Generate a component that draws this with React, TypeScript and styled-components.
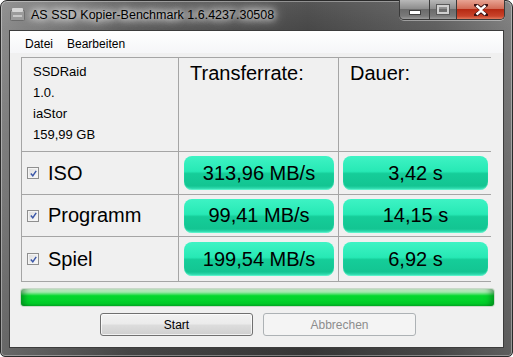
import React from "react";
import styled, { createGlobalStyle } from "styled-components";

const GlobalStyle = createGlobalStyle`
  html, body {
    margin: 0;
    padding: 0;
    background: #ffffff;
  }
  body {
    width: 513px;
    height: 357px;
    overflow: hidden;
    font-family: "Liberation Sans", Arial, sans-serif;
  }
`;

interface IResultRow {
  name: string;
  rate: string;
  duration: string;
}

const Results: IResultRow[] = [
  { name: "ISO", rate: "313,96 MB/s", duration: "3,42 s" },
  { name: "Programm", rate: "99,41 MB/s", duration: "14,15 s" },
  { name: "Spiel", rate: "199,54 MB/s", duration: "6,92 s" },
];

const DriveInfo = ["SSDRaid", "1.0.", "iaStor", "159,99 GB"];

const App = () => {
  return (
    <>
      <GlobalStyle />
      <Window>
        <TitleBar>
          <AppIcon width="15" height="14" viewBox="0 0 15 14">
            <rect x="0.5" y="3.5" width="14" height="10" rx="1" fill="#9a9a9a" stroke="#6b6b6b" />
            <rect x="2" y="1" width="11" height="4" rx="1" fill="#d6d6d6" />
            <rect x="3" y="8" width="9" height="2" fill="#c8c8c8" />
          </AppIcon>
          <Caption>AS SSD Kopier-Benchmark 1.6.4237.30508</Caption>
          <Controls>
            <CtrlButton $w={29}>
              <MinGlyph />
            </CtrlButton>
            <CtrlButton $w={26}>
              <MaxGlyph />
            </CtrlButton>
            <CtrlButton $w={47} $close>
              <svg width="14" height="12" viewBox="0 0 14 12">
                <path
                  d="M2 1 L7 5 L12 1 M2 11 L7 7 L12 11"
                  stroke="#3b1010"
                  strokeWidth="4"
                  fill="none"
                  strokeLinecap="round"
                />
                <path
                  d="M2.5 1.5 L7 5.5 L11.5 1.5 M2.5 10.5 L7 6.5 L11.5 10.5"
                  stroke="#ffffff"
                  strokeWidth="2.4"
                  fill="none"
                />
              </svg>
            </CtrlButton>
          </Controls>
        </TitleBar>
        <Client>
          <MenuBar>
            <MenuItem>Datei</MenuItem>
            <MenuItem>Bearbeiten</MenuItem>
          </MenuBar>
          <Body>
            <Table>
              <InfoCell>
                {DriveInfo.map((line, index) => (
                  <InfoLine key={index}>{line}</InfoLine>
                ))}
              </InfoCell>
              <HeaderCell>Transferrate:</HeaderCell>
              <HeaderCell>Dauer:</HeaderCell>
              {Results.map((item: IResultRow, index: number) => (
                <React.Fragment key={index}>
                  <LabelCell>
                    <CheckBox>
                      <svg width="7" height="7" viewBox="0 0 7 7">
                        <path d="M0.8 3.6 L2.8 5.8 L6.2 0.8" stroke="#3b57a8" strokeWidth="1.5" fill="none" />
                      </svg>
                    </CheckBox>
                    <Label>{item.name}</Label>
                  </LabelCell>
                  <ValueCell $left={5}>
                    <ValueBox>{item.rate}</ValueBox>
                  </ValueCell>
                  <ValueCell $left={4}>
                    <ValueBox>{item.duration}</ValueBox>
                  </ValueCell>
                </React.Fragment>
              ))}
            </Table>
            <ProgressBar />
            <ButtonRow>
              <PushButton>Start</PushButton>
              <PushButton disabled>Abbrechen</PushButton>
            </ButtonRow>
          </Body>
        </Client>
      </Window>
    </>
  );
};

const Window = styled.div`
  box-sizing: border-box;
  width: 513px;
  height: 357px;
  display: flex;
  flex-direction: column;
  padding: 0 8px 8px 8px;
  border: 1px solid #2a2a2a;
  border-radius: 7px 7px 5px 5px;
  background: linear-gradient(
      to bottom,
      rgba(255, 255, 255, 0.08) 0px,
      rgba(0, 0, 0, 0) 30px,
      rgba(0, 0, 0, 0.25) 100%
    ),
    linear-gradient(to right, #8a8a8a 0%, #5c5c5c 25%, #474747 60%, #5e5e5e 85%, #7d7d7d 100%);
  box-shadow: inset 0 0 0 1px rgba(255, 255, 255, 0.35);
`;

const TitleBar = styled.div`
  height: 29px;
  display: flex;
  align-items: flex-start;
  padding-left: 1px;
`;

const AppIcon = styled.svg`
  margin-top: 6px;
  flex-shrink: 0;
`;

const Caption = styled.div`
  margin-top: 6px;
  margin-left: 6px;
  font-size: 12.5px;
  line-height: 16px;
  color: #000000;
  white-space: nowrap;
  text-shadow: 0 0 6px #ffffff, 0 0 10px #ffffff, 0 0 14px rgba(255, 255, 255, 0.9);
`;

const Controls = styled.div`
  margin-left: auto;
  margin-top: -1px;
  margin-right: -1px;
  display: flex;
  height: 19px;
  border: 1px solid #3a3a3a;
  border-top: none;
  border-radius: 0 0 5px 5px;
  overflow: hidden;
  box-shadow: 0 1px 0 rgba(255, 255, 255, 0.4);
`;

const CtrlButton = styled.div<{ $w: number; $close?: boolean }>`
  width: ${(p) => p.$w}px;
  display: flex;
  align-items: center;
  justify-content: center;
  border-left: ${(p) => (p.$close ? "1px solid #3a3a3a" : "none")};
  & + & {
    border-left: 1px solid #3a3a3a;
  }
  background: ${(p) =>
    p.$close
      ? "linear-gradient(to bottom, #e8a493 0%, #d26d58 45%, #b62a13 50%, #c9432a 85%, #e07a5c 100%)"
      : "linear-gradient(to bottom, #b8b8b8 0%, #8e8e8e 45%, #6b6b6b 50%, #7a7a7a 85%, #9c9c9c 100%)"};
`;

const MinGlyph = styled.div`
  width: 10px;
  height: 3px;
  margin-top: 5px;
  background: #ffffff;
  border: 1px solid #404040;
`;

const MaxGlyph = styled.div`
  width: 8px;
  height: 5px;
  border: 2px solid #cfcfcf;
  outline: 1px solid #5a5a5a;
`;

const Client = styled.div`
  flex: 1;
  display: flex;
  flex-direction: column;
  background: #f0f0f0;
  border: 1px solid #3c3c3c;
`;

const MenuBar = styled.div`
  height: 22px;
  display: flex;
  align-items: center;
  padding-left: 8px;
  background: linear-gradient(to bottom, #ffffff, #f5f6f8);
`;

const MenuItem = styled.div`
  font-size: 12px;
  color: #000000;
  padding: 0 7px;
  line-height: 18px;
  margin-top: 3px;
`;

const Body = styled.div`
  flex: 1;
  display: flex;
  flex-direction: column;
  padding: 4px 12px 0 11px;
`;

const Table = styled.div`
  display: grid;
  grid-template-columns: 156px 159px 153px;
  grid-template-rows: 93px 42px 41px 44px;
  gap: 1px;
  background: #a5a5a5;
  border: 1px solid #a5a5a5;
`;

const Cell = styled.div`
  background: #f0f0f0;
  display: flex;
`;

const InfoCell = styled(Cell)`
  flex-direction: column;
  padding: 3px 0 0 11px;
`;

const InfoLine = styled.div`
  font-size: 13px;
  line-height: 21px;
  color: #000000;
`;

const HeaderCell = styled(Cell)`
  padding: 4px 0 0 11px;
  font-size: 20px;
  line-height: 23px;
  color: #000000;
`;

const LabelCell = styled(Cell)`
  align-items: center;
  padding-left: 5px;
`;

const CheckBox = styled.div`
  box-sizing: border-box;
  width: 12px;
  height: 12px;
  border: 1px solid #8f8f8f;
  background: linear-gradient(to bottom right, #dcdcdc, #fbfbfb);
  box-shadow: inset 0 0 0 1px #f4f4f4;
  display: flex;
  align-items: center;
  justify-content: center;
`;

const Label = styled.div`
  margin-left: 9px;
  font-size: 20px;
  color: #000000;
`;

const ValueCell = styled(Cell)<{ $left: number }>`
  align-items: center;
  padding: 0 4px 0 ${(p) => p.$left}px;
`;

const ValueBox = styled.div`
  flex: 1;
  height: 34px;
  border-radius: 8px;
  display: flex;
  align-items: center;
  justify-content: center;
  font-size: 20px;
  color: #000000;
  background: linear-gradient(
    to bottom,
    #3ef3c4 0%,
    #27e9b5 45%,
    #15cd99 52%,
    #13c592 88%,
    #3fe6bf 100%
  );
  box-shadow: inset 0 -1px 1px rgba(120, 255, 215, 0.6);
`;

const ProgressBar = styled.div`
  margin-top: 7px;
  width: 473px;
  height: 17px;
  border-radius: 3px;
  background: linear-gradient(
    to bottom,
    #e1f7e1 0%,
    #a9edb2 18%,
    #05d72d 40%,
    #02d02a 85%,
    #03b726 100%
  );
  box-shadow: inset 6px 0 6px -3px rgba(0, 90, 20, 0.55), inset -6px 0 6px -3px rgba(0, 90, 20, 0.55),
    0 0 0 1px #c9d9c9;
`;

const ButtonRow = styled.div`
  display: flex;
  justify-content: center;
  gap: 10px;
  margin-top: 7px;
  padding-left: 4px;
`;

const PushButton = styled.button`
  box-sizing: border-box;
  width: 153px;
  height: 23px;
  border-radius: 3px;
  font-family: "Liberation Sans", Arial, sans-serif;
  font-size: 12px;
  color: #000000;
  border: 1px solid #707070;
  background: linear-gradient(to bottom, #f2f2f2 0%, #ebebeb 48%, #dddddd 52%, #cfcfcf 100%);
  box-shadow: inset 0 0 0 1px rgba(255, 255, 255, 0.7);
  padding: 0;

  &:disabled {
    color: #8d8d8d;
    border-color: #adb2b5;
    background: #f4f4f4;
    box-shadow: none;
  }
`;

export default App;
